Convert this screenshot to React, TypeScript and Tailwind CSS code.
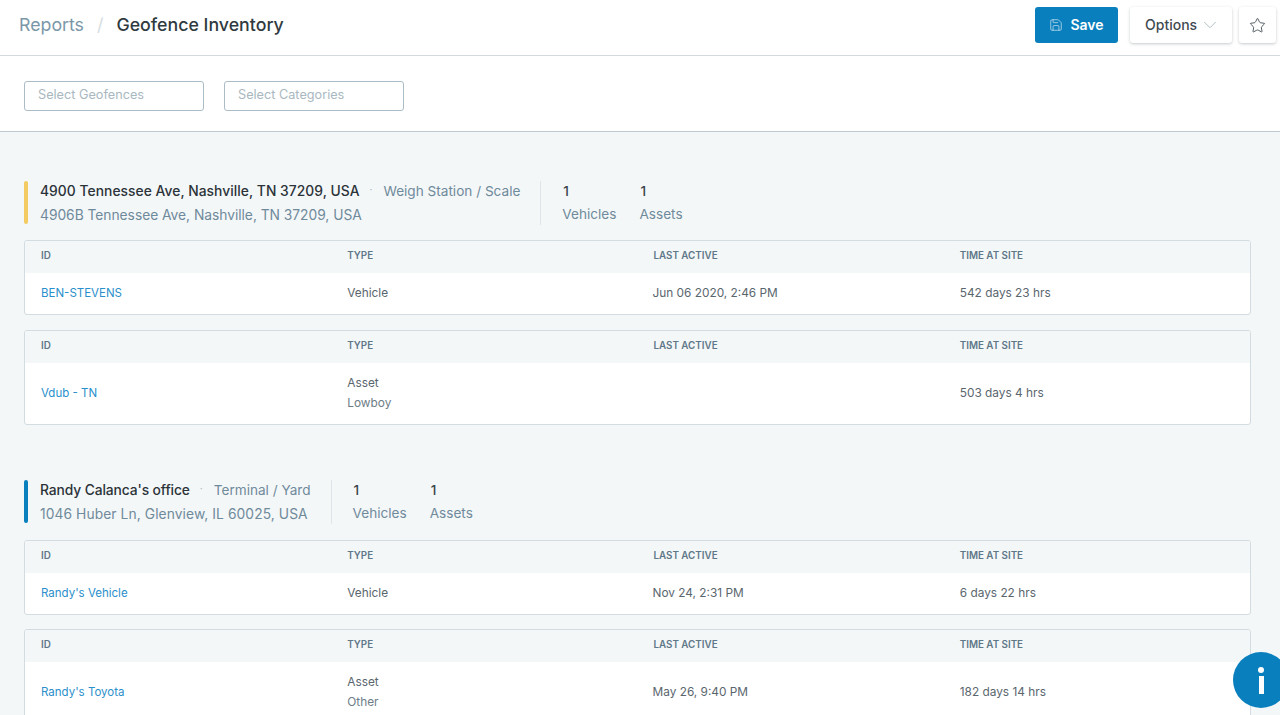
import React from 'react';
import { ChevronDown, Save, Star } from 'lucide-react';

type Row = { id: string; type: string; sub?: string; lastActive: string; time: string };

const HeaderCell = ({ children }: { children: React.ReactNode }) => (
  <div className="px-4 text-[9.8px] font-semibold uppercase text-[#5f7888]">{children}</div>
);

const InventoryTable = ({ row, className }: { row: Row; className: string }) => (
  <div className={`rounded-[3px] border border-[#d3dce0] bg-white overflow-hidden ${className}`}>
    <div className="grid grid-cols-4 items-center h-[32px] pb-[1px] bg-[#f4f7f8]">
      <HeaderCell>ID</HeaderCell>
      <HeaderCell>Type</HeaderCell>
      <HeaderCell>Last Active</HeaderCell>
      <HeaderCell>Time at Site</HeaderCell>
    </div>
    <div className={`grid grid-cols-4 items-center pt-[1px] text-[11.85px] text-[#5a666e] ${row.sub ? 'h-[61px]' : 'h-[41px]'}`}>
      <div className="px-4 text-[11.5px] text-[#2a8fcb]">{row.id}</div>
      <div className="px-4">
        <div>{row.type}</div>
        {row.sub && <div className="mt-[2px] text-[#6d7d87]">{row.sub}</div>}
      </div>
      <div className="px-4 -ml-[1px]">{row.lastActive}</div>
      <div className="px-4">{row.time}</div>
    </div>
  </div>
);

const GroupHeader = ({
  name,
  category,
  address,
  color,
  nameClass,
  addressClass,
}: {
  name: string;
  category: string;
  address: string;
  color: string;
  nameClass: string;
  addressClass: string;
}) => (
  <div className="flex items-stretch h-[44px] text-[13.82px] leading-[20px]">
    <div className={`w-[4px] mb-[1px] rounded-[2px] ${color}`} />
    <div className="ml-3 flex flex-col justify-between pr-5 border-r border-[#dfe5e8]">
      <div className="flex items-center">
        <span className={`font-medium text-[#2b3338] ${nameClass}`}>{name}</span>
        <span className="ml-[10px] mr-[11px] text-[#a9b7bf] text-[10px] relative -top-[2px]">·</span>
        <span className="text-[13.6px] text-[#6f8a9b]">{category}</span>
      </div>
      <div className={`text-[#6f8a9b] ${addressClass}`}>{address}</div>
    </div>
    <div className="ml-[21px] flex gap-[23px] text-[13.6px]">
      <div className="flex flex-col justify-between">
        <div className="pl-[1px] font-medium text-[#3a454c]">1</div>
        <div className="text-[#6f8a9b] -mt-[1px] mb-[1px]">Vehicles</div>
      </div>
      <div className="flex flex-col justify-between">
        <div className="pl-[1px] font-medium text-[#3a454c]">1</div>
        <div className="text-[#6f8a9b] -mt-[1px] mb-[1px]">Assets</div>
      </div>
    </div>
  </div>
);

export default function App() {
  return (
    <div className="relative h-[715px] overflow-hidden bg-[#f4f7f8] [font-family:Inter,sans-serif]">
      {/* Top bar */}
      <div className="flex items-center justify-between h-[56px] bg-white border-b border-[#d3dadd] pl-[19px] pr-[4px] pb-[5px]">
        <div className="flex items-center mt-[1px] text-[17.75px]">
          <span className="text-[#7a97a9]">Reports</span>
          <span className="mx-[13px] text-[#d5dde1]">/</span>
          <span className="font-medium text-[#2f3a40]">Geofence Inventory</span>
        </div>
        <div className="flex items-center gap-[12px]">
          <button className="flex items-center justify-center gap-[7px] w-[83px] h-[36px] pb-[1px] rounded-[3px] bg-[#0a7fbd] text-white text-[14px] font-semibold">
            <Save className="w-[14px] h-[14px] opacity-80" strokeWidth={1.25} />
            Save
          </button>
          <div className="flex items-center gap-[7px]">
            <button className="flex items-center pl-[15px] w-[102px] h-[36px] pb-[1px] rounded-[3px] bg-white text-[14px] font-medium text-[#3f4a51] shadow-[0_1px_3px_rgba(60,80,90,0.3)]">
              Options
              <ChevronDown className="ml-[2px] w-[22px] h-[22px] text-[#a3b1b9]" strokeWidth={0.9} />
            </button>
            <button className="flex items-center justify-center w-[37px] h-[36px] rounded-[3px] bg-white text-[#3f4a51] shadow-[0_1px_3px_rgba(60,80,90,0.3)]">
              <Star className="w-[17px] h-[17px]" strokeWidth={1.25} />
            </button>
          </div>
        </div>
      </div>

      {/* Filters */}
      <div className="flex items-start gap-[20px] h-[76px] bg-white border-b border-[#bccad1] pl-[24px] pt-[25px]">
        <div className="flex items-center w-[180px] h-[30px] pl-[13px] pb-[2px] rounded-[3px] border border-[#a9bcc7] text-[12.7px] text-[#a9b8c1]">
          Select Geofences
        </div>
        <div className="flex items-center w-[180px] h-[30px] pl-[13px] pb-[2px] rounded-[3px] border border-[#a9bcc7] text-[12.7px] text-[#a9b8c1]">
          Select Categories
        </div>
      </div>

      {/* Groups */}
      <div className="pl-[24px] pr-[29px] pt-[49px]">
        <GroupHeader
          name="4900 Tennessee Ave, Nashville, TN 37209, USA"
          category="Weigh Station / Scale"
          address="4906B Tennessee Ave, Nashville, TN 37209, USA"
          color="bg-[#f4cb62]"
          nameClass="tracking-[0.05px]"
          addressClass="tracking-[-0.03px]"
        />
        <InventoryTable
          className="mt-[15px]"
          row={{ id: 'BEN-STEVENS', type: 'Vehicle', lastActive: 'Jun 06 2020, 2:46 PM', time: '542 days 23 hrs' }}
        />
        <InventoryTable
          className="mt-[15px]"
          row={{ id: 'Vdub - TN', type: 'Asset', sub: 'Lowboy', lastActive: '', time: '503 days 4 hrs' }}
        />

        <div className="mt-[55px]">
          <GroupHeader
            name="Randy Calanca's office"
            category="Terminal / Yard"
            address="1046 Huber Ln, Glenview, IL 60025, USA"
            color="bg-[#0a7fbd]"
            nameClass="tracking-[-0.1px]"
            addressClass="tracking-[0.08px]"
          />
        </div>
        <InventoryTable
          className="mt-[16px]"
          row={{ id: "Randy's Vehicle", type: 'Vehicle', lastActive: 'Nov 24, 2:31 PM', time: '6 days 22 hrs' }}
        />
        <InventoryTable
          className="mt-[14px]"
          row={{ id: "Randy's Toyota", type: 'Asset', sub: 'Other', lastActive: 'May 26, 9:40 PM', time: '182 days 14 hrs' }}
        />
      </div>

      {/* Help bubble */}
      <div className="absolute left-[1233px] top-[652px] flex items-center justify-center w-[56px] h-[56px] rounded-full bg-[#0a7fbd] text-white">
        <div className="flex flex-col items-center gap-[3px]">
          <div className="w-[6px] h-[6px] rounded-full bg-white" />
          <div className="w-[5px] h-[18px] bg-white" />
        </div>
      </div>
    </div>
  );
}
